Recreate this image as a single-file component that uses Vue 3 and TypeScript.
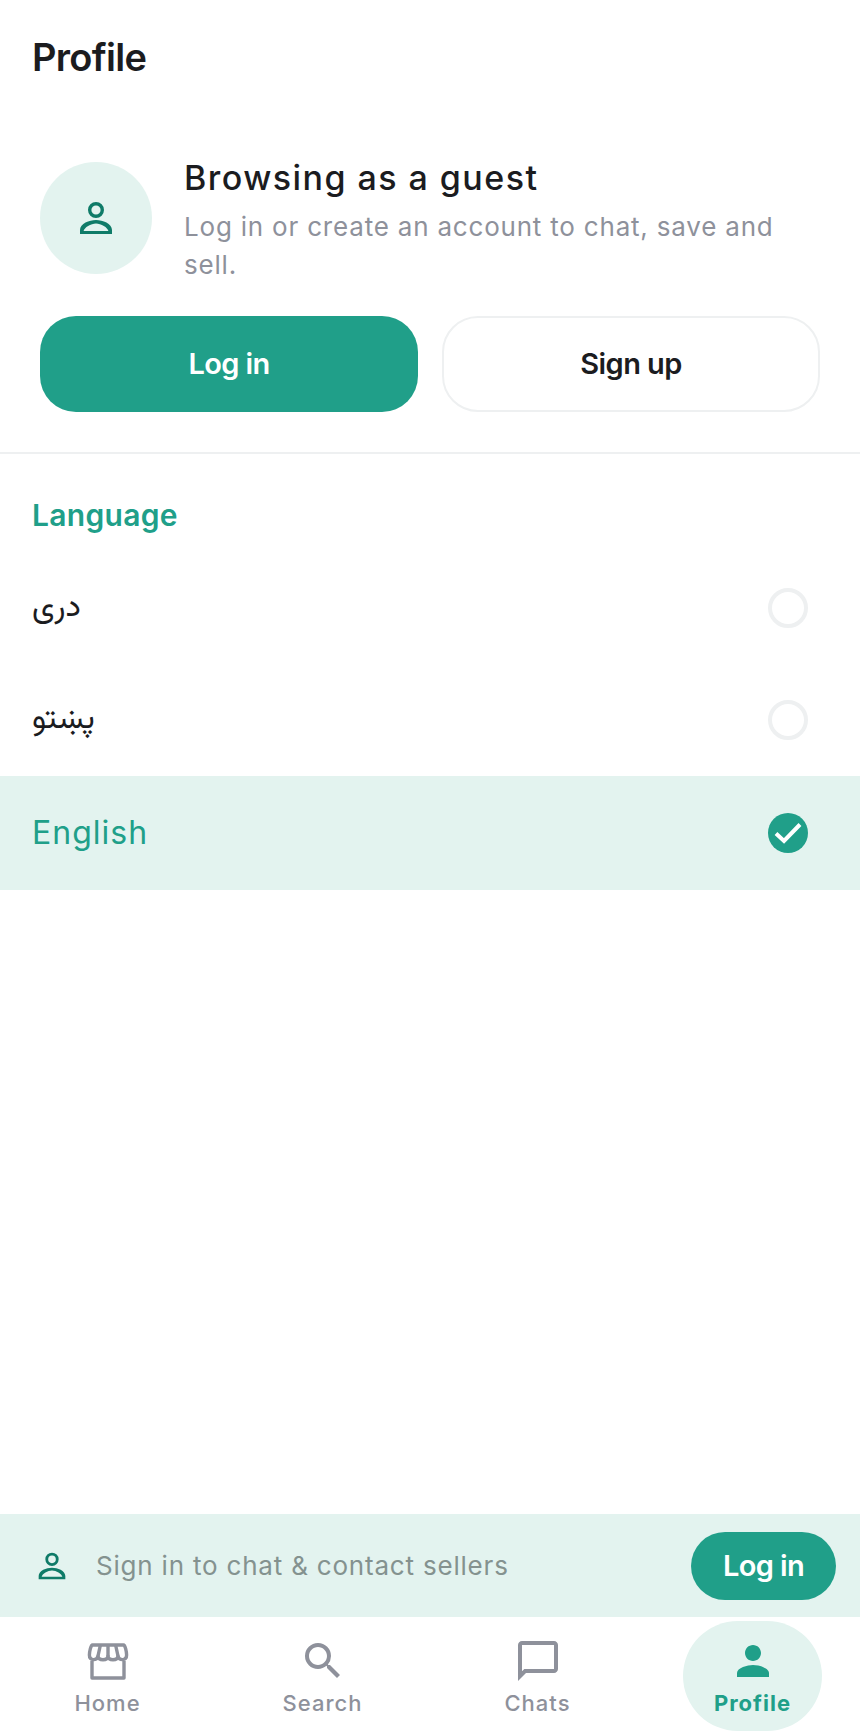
<script setup lang="ts">
interface Lang { label: string; selected: boolean }
const langs: Lang[] = [
  { label: 'دری', selected: false },
  { label: 'پښتو', selected: false },
  { label: 'English', selected: true },
]
const person = 'M12 4a4 4 0 1 0 0 8 4 4 0 0 0 0-8Zm0 1.700a2.300 2.300 0 1 1 0 4.600 2.300 2.300 0 0 1 0-4.600ZM12 13c-3.300 0-8 1.700-8 5v2h16v-2c0-3.300-4.700-5-8-5Zm-6.200 5.500c.3-1.800 3.700-3.800 6.200-3.800s5.900 2 6.200 3.800Z'
</script>

<template>
  <div class="page">
    <h1 class="title">Profile</h1>

    <section class="guest">
      <div class="guest-row">
        <div class="avatar">
          <svg width="48" height="48" viewBox="0 0 24 24"><path :d="person" fill="#0f7b68" fill-rule="evenodd" /></svg>
        </div>
        <div class="guest-text">
          <div class="guest-title">Browsing as a guest</div>
          <div class="guest-sub">Log in or create an account to chat, save and sell.</div>
        </div>
      </div>
      <div class="actions">
        <button class="btn primary">Log in</button>
        <button class="btn outline">Sign up</button>
      </div>
    </section>

    <div class="divider"></div>

    <div class="section-label">Language</div>
    <div v-for="l in langs" :key="l.label" class="lang" :class="{ selected: l.selected }">
      <span class="lang-label">{{ l.label }}</span>
      <svg v-if="l.selected" class="mark" width="40" height="40" viewBox="0 0 40 40">
        <circle cx="20" cy="20" r="20" fill="#209f89" />
        <path d="M8 20.500 L16 28 L32 11.500" fill="none" stroke="#fff" stroke-width="4" />
      </svg>
      <span v-else class="radio"></span>
    </div>

    <div class="spacer"></div>

    <div class="banner">
      <svg class="banner-icon" width="40" height="40" viewBox="0 0 24 24"><path :d="person" fill="#0f7b68" fill-rule="evenodd" /></svg>
      <span class="banner-text">Sign in to chat &amp; contact sellers</span>
      <button class="pill">Log in</button>
    </div>

    <nav class="nav">
      <div class="tab">
        <svg width="48" height="48" viewBox="0 0 24 24" fill="none" stroke="#8e919b" stroke-width="1.700" stroke-linejoin="round">
          <path d="M4 12V20.500H20V12" />
          <path d="M4.200 4H19.800C20.600 4 21.300 7.500 21.300 9C21.300 12 17.300 12 17 9.500C16.700 12 12.300 12 12 9.500C11.700 12 7.300 12 7 9.500C6.700 12 2.700 12 2.700 9C2.700 7.500 3.400 4 4.200 4Z" />
          <path d="M8.200 4 7 9.500M12 4V9.500M15.800 4 17 9.500" />
        </svg>
        <span class="tab-label">Home</span>
      </div>
      <div class="tab">
        <svg width="48" height="48" viewBox="0 0 24 24" fill="#8e919b">
          <path d="M15.500 14h-.79l-.28-.27A6.470 6.470 0 0 0 16 9.500 6.500 6.500 0 1 0 9.500 16c1.610 0 3.090-.59 4.230-1.570l.27.28v.79l5 4.990L20.490 19l-4.990-5zm-6 0C7.010 14 5 11.990 5 9.500S7.010 5 9.500 5 14 7.010 14 9.500 11.990 14 9.500 14z" />
        </svg>
        <span class="tab-label">Search</span>
      </div>
      <div class="tab">
        <svg width="48" height="48" viewBox="0 0 24 24" fill="#8e919b">
          <path d="M20 2H4c-1.100 0-2 .9-2 2v18l4-4h14c1.100 0 2-.9 2-2V4c0-1.100-.9-2-2-2zm0 14H5.170L4 17.170V4h16v12z" />
        </svg>
        <span class="tab-label">Chats</span>
      </div>
      <div class="tab active">
        <div class="blob">
          <svg width="48" height="48" viewBox="0 0 24 24" fill="#209f89">
            <path d="M12 12c2.210 0 4-1.790 4-4s-1.790-4-4-4-4 1.790-4 4 1.790 4 4 4zm0 2c-2.670 0-8 1.340-8 4v2h16v-2c0-2.660-5.330-4-8-4z" />
          </svg>
          <span class="tab-label">Profile</span>
        </div>
      </div>
    </nav>
  </div>
</template>

<style>
html, body { margin: 0; background: #fff; }
</style>

<style scoped>
.page {
  width: 860px;
  height: 1736px;
  display: flex;
  flex-direction: column;
  background: #fff;
  font-family: Inter, Vazirmatn, sans-serif;
  color: #1b1c1f;
  overflow: hidden;
}
.title {
  margin: 0;
  padding: 32px 32px 0;
  height: 82px;
  font-size: 38px;
  line-height: 50px;
  font-weight: 600;
  letter-spacing: -0.7px;
}
.guest { padding: 48px 40px 40px; }
.guest-row { display: flex; gap: 32px; align-items: flex-start; }
.avatar {
  width: 112px;
  height: 112px;
  flex: none;
  border-radius: 50%;
  background: #e3f3ef;
  display: flex;
  align-items: center;
  justify-content: center;
}
.guest-text { flex: 1; margin-top: -6px; }
.guest-title { font-size: 34px; line-height: 44px; font-weight: 550; letter-spacing: 1.450px; }
.guest-sub { margin-top: 8px; font-size: 26px; line-height: 38px; color: #8e919b; letter-spacing: 0.8px; }
.actions { display: grid; grid-template-columns: 1fr 1fr; gap: 24px; margin-top: 32px; }
.btn {
  height: 96px;
  padding: 0 0 2px;
  border-radius: 36px;
  font: 600 29px Inter, sans-serif;
  letter-spacing: -0.6px;
  cursor: pointer;
}
.primary { background: #209f89; color: #fff; border: 0; }
.outline { background: #fff; color: #1b1c1f; border: 2px solid #eef0f1; }
.divider { height: 2px; background: #eef0f1; }
.section-label {
  padding: 41px 32px 0;
  height: 57px;
  font-size: 30px;
  line-height: 40px;
  font-weight: 600;
  letter-spacing: 0.3px;
  color: #209f89;
}
.lang {
  height: 112px;
  padding: 0 52px 0 32px;
  display: flex;
  align-items: center;
  justify-content: space-between;
  font-size: 32px;
}
.lang.selected { background: #e3f3ef; color: #209f89; height: 114px; letter-spacing: 1px; }
.lang.selected .lang-label { margin-top: -2px; }
.radio { width: 40px; height: 40px; box-sizing: border-box; border: 4px solid #eef0f1; border-radius: 50%; }
.spacer { flex: 1; }
.banner {
  height: 103px;
  background: #e3f3ef;
  display: flex;
  align-items: center;
  padding: 0 24px 0 32px;
}
.banner-icon { flex: none; }
.banner-text { flex: 1; margin-left: 24px; font-size: 26px; color: #84928f; letter-spacing: 0.8px; }
.pill {
  width: 145px;
  height: 68px;
  border: 0;
  border-radius: 34px;
  background: #209f89;
  color: #fff;
  font: 600 29px Inter, sans-serif;
  letter-spacing: -0.6px;
}
.nav { height: 119px; display: grid; grid-template-columns: repeat(4, 1fr); }
.tab { display: flex; flex-direction: column; align-items: center; padding-top: 20px; color: #8e919b; }
.tab.active { padding-top: 4px; color: #209f89; }
.tab-label { font-size: 22px; line-height: 30px; font-weight: 500; letter-spacing: 1px; margin-top: 3px; }
.blob {
  width: 139px;
  height: 110px;
  border-radius: 55px;
  background: #e3f3ef;
  display: flex;
  flex-direction: column;
  align-items: center;
  padding-top: 16px;
  box-sizing: border-box;
}
.active .tab-label { font-weight: 700; }
</style>
